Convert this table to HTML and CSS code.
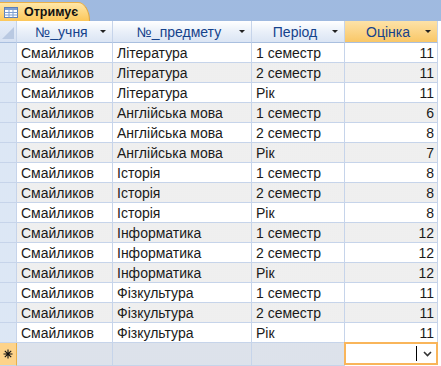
FILE: index.html
```html
<!DOCTYPE html>
<html>
<head>
<meta charset="utf-8">
<link rel="stylesheet" href="styles.css">
</head>
<body>
<div class="band">
  <div class="tab">
    <svg class="ticon" width="14" height="11" viewBox="0 0 14 11">
      <rect x="0.5" y="0.5" width="13" height="10" fill="#fff" stroke="#5b7fb8"/>
      <rect x="1" y="1" width="12" height="2" fill="#7d9fd3"/>
      <path d="M0.5 5.5H13.5M0.5 8H13.5M5 3V10.5M9 3V10.5" stroke="#7d9fd3" stroke-width="1"/>
    </svg>
    <span class="tlabel">Отримує</span>
  </div>
</div>
<div class="grid">
  <div class="row head">
    <div class="sel corner"><svg width="12" height="12" viewBox="0 0 12 12"><path d="M12 0V12H0Z" fill="#b9c9e2"/></svg></div>
    <div class="hc">№_учня<span class="arr"></span></div>
    <div class="hc">№_предмету<span class="arr"></span></div>
    <div class="hc">Період<span class="arr"></span></div>
    <div class="hc act">Оцінка<span class="arr"></span></div>
  </div>
  <div id="rows"></div>
  <div class="row newrow">
    <div class="sel star"><svg width="10" height="10" viewBox="0 0 10 10"><path d="M5 0.5V9.5M0.5 5H9.5M1.8 1.8L8.2 8.2M8.2 1.8L1.8 8.2" stroke="#111" stroke-width="1.1"/></svg></div>
    <div class="c"></div>
    <div class="c"></div>
    <div class="c"></div>
    <div class="c edit"><span class="caret"></span><svg class="chev" width="9" height="6" viewBox="0 0 9 6"><path d="M1 1L4.5 4.5L8 1" fill="none" stroke="#333" stroke-width="1.6"/></svg></div>
  </div>
</div>
<script src="app.js"></script>
</body>
</html>
```
FILE: app.js
```js
const data = [
  ["Смайликов","Література","1 семестр",11],
  ["Смайликов","Література","2 семестр",11],
  ["Смайликов","Література","Рік",11],
  ["Смайликов","Англійська мова","1 семестр",6],
  ["Смайликов","Англійська мова","2 семестр",8],
  ["Смайликов","Англійська мова","Рік",7],
  ["Смайликов","Історія","1 семестр",8],
  ["Смайликов","Історія","2 семестр",8],
  ["Смайликов","Історія","Рік",8],
  ["Смайликов","Інформатика","1 семестр",12],
  ["Смайликов","Інформатика","2 семестр",12],
  ["Смайликов","Інформатика","Рік",12],
  ["Смайликов","Фізкультура","1 семестр",11],
  ["Смайликов","Фізкультура","2 семестр",11],
  ["Смайликов","Фізкультура","Рік",11]
];
const host = document.getElementById("rows");
data.forEach((r, i) => {
  const row = document.createElement("div");
  row.className = "row data" + (i % 2 ? " alt" : "");
  row.innerHTML = '<div class="sel"></div>' +
    '<div class="c">' + r[0] + '</div>' +
    '<div class="c">' + r[1] + '</div>' +
    '<div class="c">' + r[2] + '</div>' +
    '<div class="c num">' + r[3] + '</div>';
  host.appendChild(row);
});
```
FILE: styles.css
```css
html, body {
  margin: 0;
  padding: 0;
  background: #fff;
}
body {
  width: 441px;
  height: 366px;
  overflow: hidden;
  font-family: "Liberation Sans", Arial, sans-serif;
  font-size: 14px;
  color: #1a1a1a;
}
.band {
  height: 21px;
  background-color: #a6bfe4;
  background-image: radial-gradient(#98b3dc 0.6px, transparent 0.8px);
  background-size: 2px 2px;
  display: flex;
  align-items: flex-end;
}
.tab {
  height: 19px;
  width: 90px;
  padding-left: 4px;
  display: flex;
  align-items: center;
  gap: 6px;
  background: linear-gradient(#ffe7a8, #fcc75a);
  border-top: 1px solid #e9b04a;
  border-right: 1px solid #e0a640;
  border-top-right-radius: 12px 19px;
  box-sizing: border-box;
}
.ticon { flex: none; }
.tlabel {
  font-weight: bold;
  font-size: 12.5px;
  color: #111;
}
.grid {
  width: 438px;
}
.row {
  display: grid;
  grid-template-columns: 17px 96px 139px 93px 93px;
  height: 20px;
}
.row > div {
  border-right: 1px solid #c6d4ea;
  border-bottom: 1px solid #c6d4ea;
  box-sizing: border-box;
  display: flex;
  align-items: center;
  white-space: nowrap;
  overflow: hidden;
}
.head {
  height: 22px;
}
.head > div {
  background: linear-gradient(#ffffff, #eaf0f9 50%, #dbe5f4);
  border-bottom-color: #a9bfdf;
}
.head .corner {
  background: linear-gradient(#e6edf8, #d6e1f2);
  justify-content: center;
  align-items: flex-end;
  padding-bottom: 3px;
}
.hc {
  justify-content: center;
  position: relative;
  color: #15428b;
  padding-right: 6px;
}
.hc.act {
  background: linear-gradient(#fde2a8, #f9c767) !important;
}
.arr {
  position: absolute;
  right: 6px;
  top: 9px;
  width: 0;
  height: 0;
  border-left: 3px solid transparent;
  border-right: 3px solid transparent;
  border-top: 3px solid #222;
}
.sel {
  background-color: #e4ecf7;
  background-image: radial-gradient(#d4e0f1 0.6px, transparent 0.8px);
  background-size: 2px 2px;
}
.c {
  padding-left: 4px;
  background: #fff;
}
.alt .c {
  background-color: #f3f3f3;
  background-image: radial-gradient(#e8e8e8 0.6px, transparent 0.8px);
  background-size: 2px 2px;
}
.num {
  justify-content: flex-end;
  padding-right: 3px;
}
.newrow > div {
  background-color: #e2e6ee;
  background-image: radial-gradient(#d7dce6 0.6px, transparent 0.8px);
  background-size: 2px 2px;
}
.newrow .star {
  background: #fdd38a;
  justify-content: center;
  border-right-color: #e9b04a;
}
.newrow .edit {
  background: #fff;
  border: 2px solid #f9b55a;
  justify-content: flex-end;
  padding-right: 4px;
  gap: 6px;
  position: relative;
  top: -1px;
  height: 23px;
  margin-left: -1px;
}
.caret {
  width: 1px;
  height: 15px;
  background: #000;
}
.chev { flex: none; }
```
